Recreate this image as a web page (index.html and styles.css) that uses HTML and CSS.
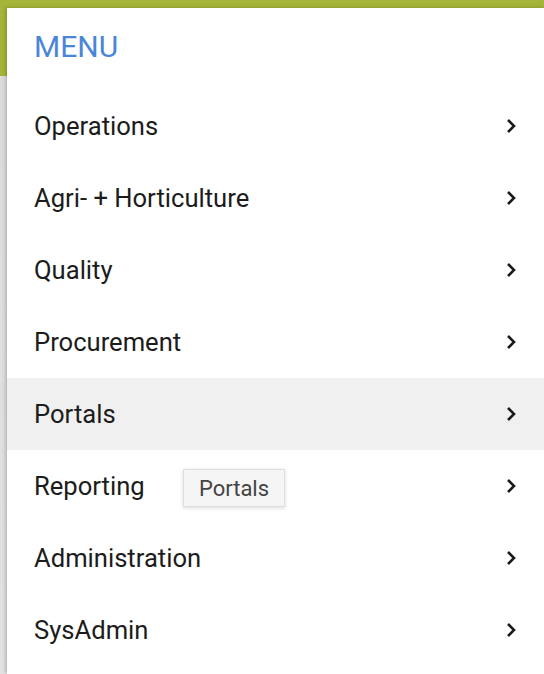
FILE: index.html
```html
<!DOCTYPE html>
<html>
<head>
<meta charset="utf-8">
<link rel="stylesheet" href="styles.css">
</head>
<body>
<div class="panel">
  <div class="menu-title">MENU</div>
  <ul class="menu-list">
    <li class="menu-item"><span>Operations</span><svg class="chev" viewBox="0 0 12 18"><path d="M3 3l6 6-6 6"/></svg></li>
    <li class="menu-item"><span>Agri- + Horticulture</span><svg class="chev" viewBox="0 0 12 18"><path d="M3 3l6 6-6 6"/></svg></li>
    <li class="menu-item"><span>Quality</span><svg class="chev" viewBox="0 0 12 18"><path d="M3 3l6 6-6 6"/></svg></li>
    <li class="menu-item"><span>Procurement</span><svg class="chev" viewBox="0 0 12 18"><path d="M3 3l6 6-6 6"/></svg></li>
    <li class="menu-item active"><span>Portals</span><svg class="chev" viewBox="0 0 12 18"><path d="M3 3l6 6-6 6"/></svg></li>
    <li class="menu-item"><span>Reporting</span><div class="tooltip">Portals</div><svg class="chev" viewBox="0 0 12 18"><path d="M3 3l6 6-6 6"/></svg></li>
    <li class="menu-item"><span>Administration</span><svg class="chev" viewBox="0 0 12 18"><path d="M3 3l6 6-6 6"/></svg></li>
    <li class="menu-item"><span>SysAdmin</span><svg class="chev" viewBox="0 0 12 18"><path d="M3 3l6 6-6 6"/></svg></li>
  </ul>
</div>
</body>
</html>
```
FILE: styles.css
```css
html, body {
  margin: 0;
  padding: 0;
  height: 100%;
  overflow: hidden;
}
body {
  background: linear-gradient(#a6b53a 0, #a6b53a 76px, #dcdcdc 76px, #e2e2e2 100%);
  font-family: Roboto, "Liberation Sans", sans-serif;
}
.panel {
  margin: 8px 0 0 7px;
  background: #fff;
  height: 666px;
  box-shadow: -1px 0 4px rgba(0,0,0,0.25);
}
.menu-title {
  height: 82px;
  box-sizing: border-box;
  padding: 22px 0 0 27px;
  color: #4a86d8;
  font-size: 30px;
  line-height: 34px;
}
.menu-list {
  list-style: none;
  margin: 0;
  padding: 0;
}
.menu-item {
  position: relative;
  height: 72px;
  display: flex;
  align-items: center;
  justify-content: space-between;
  padding: 0 27px 0 27px;
  font-size: 25.6px;
  color: #1c1c1c;
}
.menu-item.active {
  background: #f0f0f0;
}
.chev {
  width: 12px;
  height: 18px;
  fill: none;
  stroke: #1a1a1a;
  stroke-width: 2.6;
}
.tooltip {
  position: absolute;
  left: 176px;
  top: 19px;
  width: 102px;
  height: 38px;
  box-sizing: border-box;
  background: #f5f5f5;
  border: 1px solid #dedede;
  box-shadow: 0 1px 4px rgba(0,0,0,0.15);
  font-size: 22px;
  color: #444;
  display: flex;
  align-items: center;
  justify-content: center;
}
```
